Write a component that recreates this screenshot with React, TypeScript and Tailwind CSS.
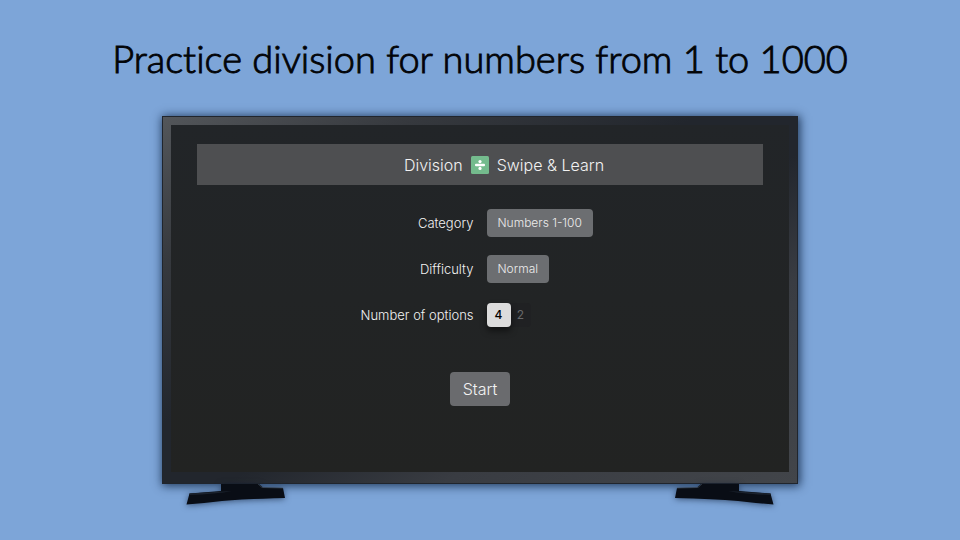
import type { ReactNode } from "react";

type SettingRowProps = {
  id: string;
  label: string;
  htmlFor: string;
  children: ReactNode;
};

type SettingButtonProps = {
  id: string;
  value: string;
};

type StandProps = {
  className?: string;
};

const OPTION_COUNTS = [4, 2];

function SettingRow({ id, label, htmlFor, children }: SettingRowProps) {
  return (
    <div className="grid grid-cols-2 items-center gap-[13px]">
      <label id={id} htmlFor={htmlFor} className="text-right text-[13px] leading-[22px] font-light">
        {label}
      </label>
      <div className="flex h-7 items-center">{children}</div>
    </div>
  );
}

function SettingButton({ id, value }: SettingButtonProps) {
  return (
    <button
      id={id}
      type="button"
      className="h-7 cursor-pointer rounded-sm bg-[#6c6e71] px-[11px] text-xs font-light text-[#ececec]"
    >
      {value}
    </button>
  );
}

function OptionPicker() {
  return (
    <div
      role="radiogroup"
      aria-labelledby="options-label"
      className="flex items-center rounded-sm bg-[#202123]"
    >
      {OPTION_COUNTS.map((count, index) => (
        <label key={count} className="cursor-pointer">
          <input
            id={`options-${count}`}
            type="radio"
            name="options"
            defaultChecked={index === 0}
            className="peer sr-only"
          />
          <span className="flex h-6 w-5 items-center justify-center rounded-sm text-xs text-[#68696b] peer-checked:w-6 peer-checked:bg-[#dcdcdc] peer-checked:font-medium peer-checked:text-black peer-checked:shadow-[0_4px_6px_rgba(0,0,0,0.5)]">
            {count}
          </span>
        </label>
      ))}
    </div>
  );
}

function DivisionIcon() {
  return (
    <svg viewBox="0 0 18 18" className="size-[18px]" aria-hidden="true">
      <rect width="18" height="18" rx="1.5" fill="#74bb8d" />
      <rect x="4" y="7.700" width="10" height="2.600" rx="1" fill="#fff" />
      <circle cx="9" cy="5.600" r="1.600" fill="#fff" />
      <circle cx="9" cy="12.400" r="1.600" fill="#fff" />
    </svg>
  );
}

function Stand({ className = "" }: StandProps) {
  return (
    <svg
      viewBox="0 0 100 22"
      className={`h-[22px] w-[100px] drop-shadow-[0_1px_3px_rgba(10,25,50,0.6)] ${className}`}
      aria-hidden="true"
    >
      <path
        d="M35 0H73L77 3.500L97 4L99 14Q60 15 36 17Q18 19 0.500 20.500L3.500 9.500L35 7Z"
        fill="#090d15"
      />
      <path d="M3.500 9.500L46 7Q30 10 3 11Z" fill="#1b222d" />
      <path d="M72 0L76 3.500L97 4" fill="none" stroke="#46505d" strokeWidth="0.600" />
    </svg>
  );
}

export default function App() {
  return (
    <main className="flex min-h-screen flex-col items-center bg-[#7da5d8] font-['Inter',sans-serif] text-[#f2f2f2]">
      <h1 className="pt-8 text-center font-['Lato',sans-serif] text-[38px] leading-[52px] font-light text-black [-webkit-text-stroke:1px_#05080d] [font-variant-ligatures:none]">
        Practice division for numbers from 1 to 1000
      </h1>

      <div className="mt-8 w-[66.25%]">
        <section className="border border-[#20252d] bg-[linear-gradient(to_bottom_right,#53565a,#36393e_20%,#22262d_42%,#22262d_55%,#393c42_72%,#42454a)] p-2 pb-[11px] shadow-[1px_1px_9px_1px_rgba(10,30,60,0.8)]">
          <div className="flex flex-col items-center bg-[linear-gradient(#222528,#222322)] px-[26px] pt-[19px] pb-[66px]">
            <header className="flex h-[41px] w-full items-center justify-center gap-2 bg-[#4e4f51] pl-12 text-base font-light">
              <span>Division</span>
              <DivisionIcon />
              <span>Swipe &amp; Learn</span>
            </header>

            <div className="mt-6 flex w-full flex-col gap-[18px]">
              <SettingRow id="category-label" label="Category" htmlFor="category">
                <SettingButton id="category" value="Numbers 1-100" />
              </SettingRow>
              <SettingRow id="difficulty-label" label="Difficulty" htmlFor="difficulty">
                <SettingButton id="difficulty" value="Normal" />
              </SettingRow>
              <SettingRow id="options-label" label="Number of options" htmlFor="options-4">
                <OptionPicker />
              </SettingRow>
            </div>

            <button
              type="button"
              className="mt-[43px] h-[34px] cursor-pointer rounded-sm bg-[#6a6b6e] px-[13px] text-base font-light"
            >
              Start
            </button>
          </div>
        </section>

        <div className="flex justify-between px-6">
          <Stand />
          <Stand className="-scale-x-100" />
        </div>
      </div>
    </main>
  );
}
